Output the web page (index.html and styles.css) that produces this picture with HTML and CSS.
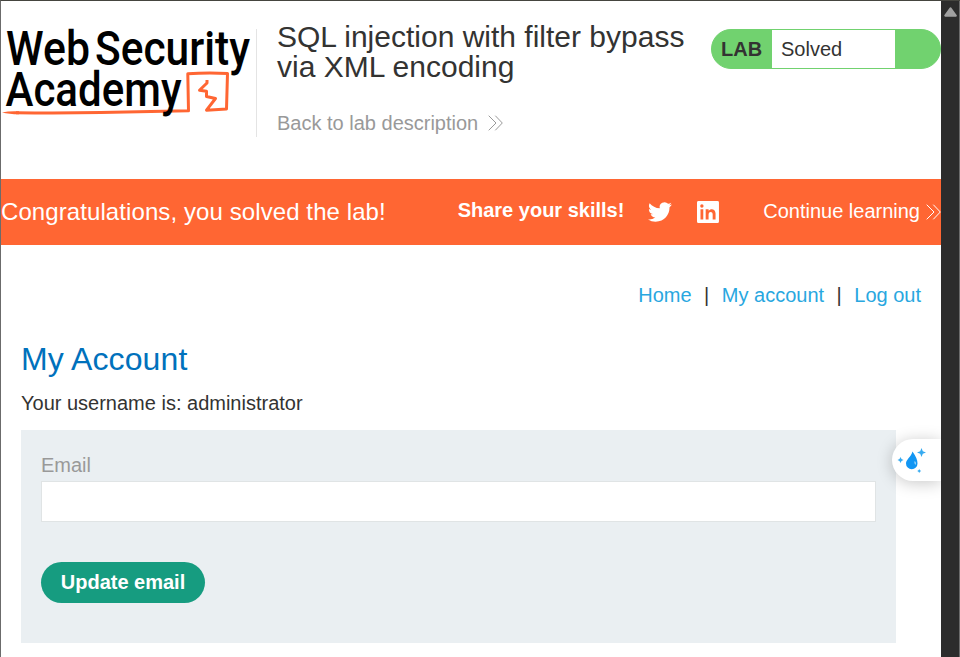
FILE: index.html
```html
<!DOCTYPE html>
<html lang="en">
<head>
<meta charset="utf-8">
<title>SQL injection with filter bypass via XML encoding</title>
<link rel="stylesheet" href="styles.css">
</head>
<body>
<div class="window">
  <div class="page">
    <header class="lab-header">
      <svg class="logo" viewBox="0 0 255 108" role="img" aria-label="Web Security Academy">
        <path class="logo-line" d="M15 83.800Q60 84.300 100 83.600T187.500 81.800L186.800 44.800Q206 43.500 226.500 44.500L225.500 80L205.500 81.200L214.500 69.500L205.500 67.500V62.200L198.500 61.300L206 54V51"/>
        <path class="logo-tip" d="M1 83.500Q8 81.800 18 82.300V85.300Q8 85.200 1 83.500Z"/>
        <g class="logo-text">
          <text x="5" y="36" textLength="84" lengthAdjust="spacingAndGlyphs">Web</text>
          <text x="94" y="36" textLength="155" lengthAdjust="spacingAndGlyphs">Security</text>
          <text x="4.500" y="76.500" textLength="176" lengthAdjust="spacingAndGlyphs">Academy</text>
        </g>
      </svg>
      <div class="title">
        <h1>SQL injection with filter bypass<br>via XML encoding</h1>
        <a class="back">Back to lab description
          <svg class="chevrons" viewBox="0 0 15 16"><path d="M.7.7L8 8L.7 15.300M7.300.7L14.300 8L7.300 15.300"/></svg>
        </a>
      </div>
      <div class="status"><b>LAB</b><span>Solved</span></div>
    </header>
    <section class="banner">
      <p class="congrats">Congratulations, you solved the lab!</p>
      <strong class="share">Share your skills!</strong>
      <svg class="twitter" viewBox="0 0 24 24"><path d="M23.950 4.570a10 10 0 0 1-2.820.775 4.960 4.960 0 0 0 2.160-2.723c-.95.555-2 .96-3.120 1.184a4.920 4.920 0 0 0-8.380 4.482C7.690 8.090 4.070 6.130 1.640 3.160a4.820 4.820 0 0 0-.67 2.475c0 1.710.87 3.213 2.190 4.096a4.900 4.900 0 0 1-2.230-.616v.06a4.920 4.920 0 0 0 3.950 4.827 5 5 0 0 1-2.210.085 4.940 4.940 0 0 0 4.600 3.417A9.870 9.870 0 0 1 0 19.540a14 14 0 0 0 7.550 2.209c9.050 0 14-7.496 14-13.985 0-.21 0-.42-.02-.63a9.900 9.900 0 0 0 2.420-2.564z"/></svg>
      <svg class="linkedin" viewBox="0 0 22 22"><path fill-rule="evenodd" d="M1.500 0H20.500Q22 0 22 1.500V20.500Q22 22 20.500 22H1.500Q0 22 0 20.500V1.500Q0 0 1.500 0ZM3.500 8.300V18.500H6.300V8.300ZM4.900 3.300A1.700 1.700 0 1 0 4.900 6.700A1.700 1.700 0 1 0 4.900 3.300ZM8.700 8.300V18.500H11.600V13.500C11.600 10.200 15.700 10.300 15.700 13.200V18.500H18.600V12.500C18.600 7.800 13.700 6.900 11.600 9.800V8.300Z"/></svg>
      <a class="continue">Continue learning
        <svg class="chevrons" viewBox="0 0 15 16"><path d="M.7.7L8 8L.7 15.300M7.300.7L14.300 8L7.300 15.300"/></svg>
      </a>
    </section>
    <main>
      <nav><a>Home</a><span>|</span><a>My account</a><span>|</span><a>Log out</a></nav>
      <h2>My Account</h2>
      <p class="username">Your username is: administrator</p>
      <form>
        <label for="email">Email</label>
        <input id="email" type="email">
        <button type="button">Update email</button>
      </form>
    </main>
    <div class="assistant">
      <svg viewBox="0 0 30 28">
        <path class="drop" d="M15.500 3.500C19 8.500 20.500 12 20.500 15.500A5.700 5.700 0 0 1 9 15.500C9 11.500 14 9 15.500 3.500Z"/>
        <path class="spark" d="M24.500 0L25.800 3.200L29 4.500L25.800 5.800L24.500 9L23.200 5.800L20 4.500L23.200 3.200ZM3.500 9L4.500 11L6.500 12L4.500 13L3.500 15L2.500 13L.5 12L2.500 11ZM22.200 21L22.900 22.300L24.200 23L22.900 23.700L22.200 25L21.500 23.700L20.200 23L21.500 22.300Z"/>
        <path class="shine" d="M17.500 13Q20 14.500 18.500 17Q16.500 15.500 17.500 13Z"/>
      </svg>
    </div>
  </div>
  <div class="scrollbar"><svg viewBox="0 0 12 9"><path d="M6 1.200L10.800 7.800H1.200Z"/></svg></div>
</div>
</body>
</html>
```
FILE: styles.css
```css
* { box-sizing: border-box; }
body {
  margin: 0;
  font: 20px/23px "Liberation Sans", Arial, sans-serif;
  color: #333332;
  background: #fff;
  overflow: hidden;
}
h1, h2, p { margin: 0; font-weight: 400; }
.window {
  display: flex;
  height: 657px;
  border-top: 1px solid #45453f;
  border-left: 1px solid #6b6b6b;
}
.page { position: relative; width: 940px; flex: none; overflow: hidden; }
.scrollbar {
  width: 19px;
  background: #2c2c2c;
  border-right: 1px solid #6b6b6b;
  padding: 6px 0 0 3px;
}
.scrollbar svg { display: block; width: 13px; height: 10px; }
.scrollbar path { fill: #a0a0a0; stroke: #a0a0a0; stroke-width: 2; stroke-linejoin: round; }

.lab-header { display: flex; align-items: flex-start; height: 178px; padding-top: 28px; }
.logo { width: 255px; height: 108px; flex: none; overflow: visible; }
.logo-text { font: 500 47.500px Roboto, sans-serif; fill: #000; }
.logo-line { fill: none; stroke: #ff6633; stroke-width: 3; stroke-linejoin: round; stroke-linecap: butt; }
.logo-tip { fill: #ff6633; }
.title { width: 455px; height: 108px; padding-left: 20px; border-left: 1px solid #e4e4e4; }
.title h1 { font-size: 30px; line-height: 30px; margin-top: -7px; white-space: nowrap; }
.back { display: flex; align-items: center; gap: 10px; margin-top: 30px; color: #999; white-space: nowrap; }
.back .chevrons { margin-bottom: 2px; }
.chevrons { width: 15px; height: 16px; fill: none; stroke: currentColor; stroke-width: 1; }
.status {
  display: flex;
  width: 230px;
  height: 40px;
  overflow: hidden;
  border: 1px solid #71d26f;
  border-radius: 20px;
  background: #71d26f;
  line-height: 38px;
}
.status b { width: 60px; padding-left: 9px; }
.status span { width: 123px; padding-left: 9px; background: #fff; }

.banner {
  display: flex;
  align-items: center;
  height: 66px;
  color: #fff;
  background: #ff6633;
  white-space: nowrap;
}
.congrats { width: 457.500px; padding-bottom: 2px; font-size: 24px; letter-spacing: .09px; }
.share { width: 190.500px; padding-bottom: 3px; }
.twitter { width: 24px; height: 24px; margin-right: 25px; fill: #fff; }
.linkedin { width: 22px; height: 22px; margin-right: 44.500px; margin-bottom: 1px; fill: #fff; }
.continue { display: flex; align-items: center; gap: 6px; margin-bottom: 1px; }

main { padding: 39px 20px 0; }
nav { display: flex; justify-content: flex-end; gap: 12.500px; color: #333332; }
nav a { color: #29a7df; }
h2 { margin-top: 31px; font-size: 32px; line-height: 42px; letter-spacing: .1px; color: #0071bc; }
.username { margin-top: 12px; }
form { width: 875px; height: 213px; margin-top: 15px; padding: 24px 20px; background: #eaeff2; }
label { display: block; color: #999; }
input { display: block; width: 835px; height: 41px; margin-top: 4px; border: 1px solid #e0e4e5; background: #fff; }
button {
  display: block;
  width: 164px;
  height: 41px;
  margin-top: 40px;
  padding: 0;
  border: 0;
  border-radius: 21px;
  color: #fff;
  background: #169c80;
  font: bold 20px "Liberation Sans", Arial, sans-serif;
}
.assistant {
  position: absolute;
  top: 438px;
  right: 0;
  width: 49px;
  height: 42px;
  padding: 9px 0 0 5px;
  border-radius: 21px 0 0 21px;
  background: #fff;
  box-shadow: 0 2px 16px rgba(0, 0, 0, .22);
}
.assistant svg { display: block; width: 30px; height: 28px; }
.drop { fill: #1296f3; }
.spark { fill: #36aaf0; }
.shine { fill: #8ed1fa; }
```
